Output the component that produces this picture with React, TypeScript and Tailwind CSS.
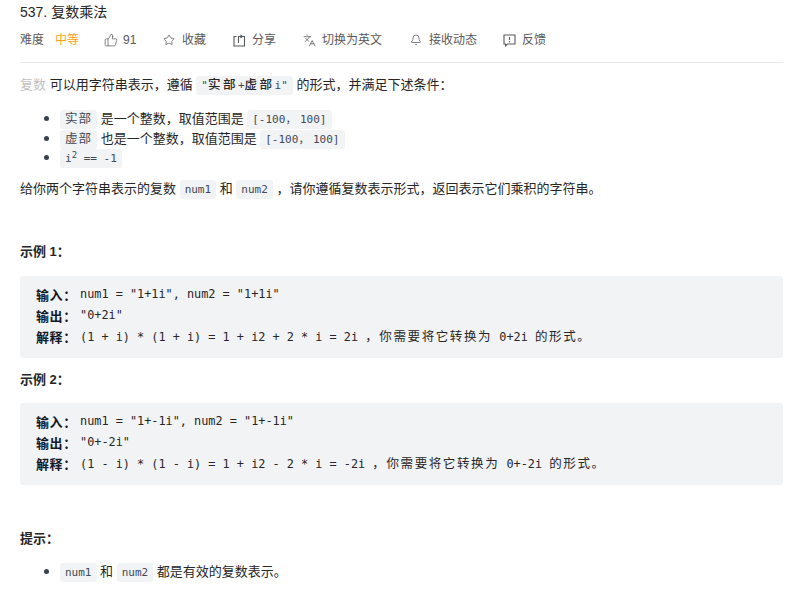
import React from "react";
import { ThumbsUp, Star, Languages, Bell } from "lucide-react";

const sans = "[font-family:'Liberation_Sans','Noto_Sans_CJK_SC',sans-serif]";

function C({ children }: { children: React.ReactNode }) {
  return (
    <code className="rounded-[3px] bg-[#f2f3f5] px-[5px] py-[3px] [font-family:'DejaVu_Sans_Mono','Noto_Sans_CJK_SC',monospace] text-[11px] text-[#404a57]">
      {children}
    </code>
  );
}

function Z({ children }: { children: React.ReactNode }) {
  return <span className="[font-family:'Noto_Sans_CJK_SC',sans-serif] text-[12.5px] leading-[1] tracking-[1px]">{children}</span>;
}

function Q({ children }: { children: React.ReactNode }) {
  return <span className="[font-family:'Noto_Sans_CJK_SC',sans-serif] text-[12.5px] font-medium leading-[1] tracking-[2.5px] text-[#262626]">{children}</span>;
}

function P({ children }: { children: React.ReactNode }) {
  return <span className="[font-family:'Noto_Sans_CJK_SC',sans-serif] text-[12.5px] tracking-[1.6px]">{children}</span>;
}

function Meta({ icon, label, className }: { icon: React.ReactNode; label: string; className: string }) {
  return (
    <div className={`flex items-center ${className}`}>
      <span className="flex w-[19px] shrink-0 items-center">{icon}</span>
      <span>{label}</span>
    </div>
  );
}

function ShareIcon() {
  return (
    <svg width="13" height="13" viewBox="0 0 13 13" fill="none" stroke="currentColor" strokeWidth="1.1">
      <path d="M3.5 2.5H1v9.5h10.5V2.5H7" />
      <path d="M5.5 9V2.5H9M7.5 1l1.8 1.5L7.5 4" />
    </svg>
  );
}

function FeedbackIcon() {
  return (
    <svg width="13" height="13" viewBox="0 0 13 13" fill="none" stroke="currentColor" strokeWidth="1.1">
      <path d="M1 1h11v9H4.5L2.5 12v-2H1z" />
      <path d="M6.5 3v3M6.5 7v1.2" />
    </svg>
  );
}

function Pre({ lines }: { lines: [string, React.ReactNode][] }) {
  return (
    <div className="rounded-[3px] bg-[#f2f3f5] px-[16px] pb-[10px] pt-[9px] [font-family:'DejaVu_Sans_Mono','Noto_Sans_CJK_SC',monospace] text-[11.85px] text-[#262626]">
      {lines.map(([k, v]) => (
        <div key={k} className="flex h-[21px] items-center whitespace-pre">
          <b className="inline-block w-[44px] shrink-0 [font-family:'Noto_Sans_CJK_SC',sans-serif] text-[13px] font-bold tracking-[0.6px] text-[#111827]">{k}</b>
          <span>{v}</span>
        </div>
      ))}
    </div>
  );
}

function Li({ children }: { children: React.ReactNode }) {
  return <li className="h-[19.5px] leading-[19.5px]">{children}</li>;
}

export default function App() {
  const comma = <span className="tracking-[-3px]">，</span>;
  return (
    <div className={`h-[592px] w-[804px] overflow-hidden bg-white pl-[20px] pr-[21px] ${sans} text-[13px] text-[#262626]`}>
      <div className="pt-[3px] text-[14px] leading-[18px] text-[#262626]">537. 复数乘法</div>
      <div className="mt-[10px] flex h-[18px] items-center text-[12px] text-[#595959]">
        <span className="w-[35px]">难度</span>
        <span className="w-[49px] text-[#ffa116]">中等</span>
        <Meta className="w-[59px]" icon={<ThumbsUp size={14} strokeWidth={1.2} />} label="91" />
        <Meta className="w-[70px]" icon={<Star size={12} strokeWidth={1.5} />} label="收藏" />
        <Meta className="w-[70px]" icon={<ShareIcon />} label="分享" />
        <Meta className="w-[107px]" icon={<Languages size={13} strokeWidth={1.4} />} label="切换为英文" />
        <Meta className="w-[93px]" icon={<Bell size={12} strokeWidth={1.5} />} label="接收动态" />
        <Meta className="" icon={<FeedbackIcon />} label="反馈" />
      </div>
      <div className="mt-[13px] border-t border-[#e8e8e8]" />
      <p className="mt-[12px] h-[20px] leading-[20px]">
        <span className="text-[#bfbfbf]">复数</span> 可以用字符串表示，遵循 <C>"<Q>实部</Q>+<Q>虚部</Q>i"</C> 的形式，并满足下述条件：
      </p>
      <ul className="mt-[13px] list-disc pl-[40px] marker:text-[16px] marker:text-[#374151]">
        <Li><C><Z>实部</Z></C> 是一个整数，取值范围是 <C>[-100{comma} 100]</C></Li>
        <Li><C><Z>虚部</Z></C> 也是一个整数，取值范围是 <C>[-100{comma} 100]</C></Li>
        <Li><C>i<sup className="text-[9px] leading-[0]">2</sup> == -1</C></Li>
      </ul>
      <p className="mt-[12px] h-[20px] leading-[20px]">
        给你两个字符串表示的复数 <C>num1</C> 和 <C>num2</C> ，请你遵循复数表示形式，返回表示它们乘积的字符串。
      </p>
      <p className="mt-[43px] font-bold leading-[20px]">示例 1：</p>
      <div className="mt-[14px]">
        <Pre lines={[
          ["输入：", "num1 = \"1+1i\", num2 = \"1+1i\""],
          ["输出：", "\"0+2i\""],
          ["解释：", <>(1 + i) * (1 + i) = 1 + i2 + 2 * i = 2i <P>，你需要将它转换为</P> 0+2i <P>的形式。</P></>],
        ]} />
      </div>
      <p className="mt-[12px] font-bold leading-[20px]">示例 2：</p>
      <div className="mt-[13px]">
        <Pre lines={[
          ["输入：", "num1 = \"1+-1i\", num2 = \"1+-1i\""],
          ["输出：", "\"0+-2i\""],
          ["解释：", <>(1 - i) * (1 - i) = 1 + i2 - 2 * i = -2i <P>，你需要将它转换为</P> 0+-2i <P>的形式。</P></>],
        ]} />
      </div>
      <p className="mt-[44px] font-bold leading-[20px]">提示：</p>
      <ul className="mt-[12px] list-disc pl-[40px] marker:text-[16px] marker:text-[#374151]">
        <Li><C>num1</C> 和 <C>num2</C> 都是有效的复数表示。</Li>
      </ul>
    </div>
  );
}
